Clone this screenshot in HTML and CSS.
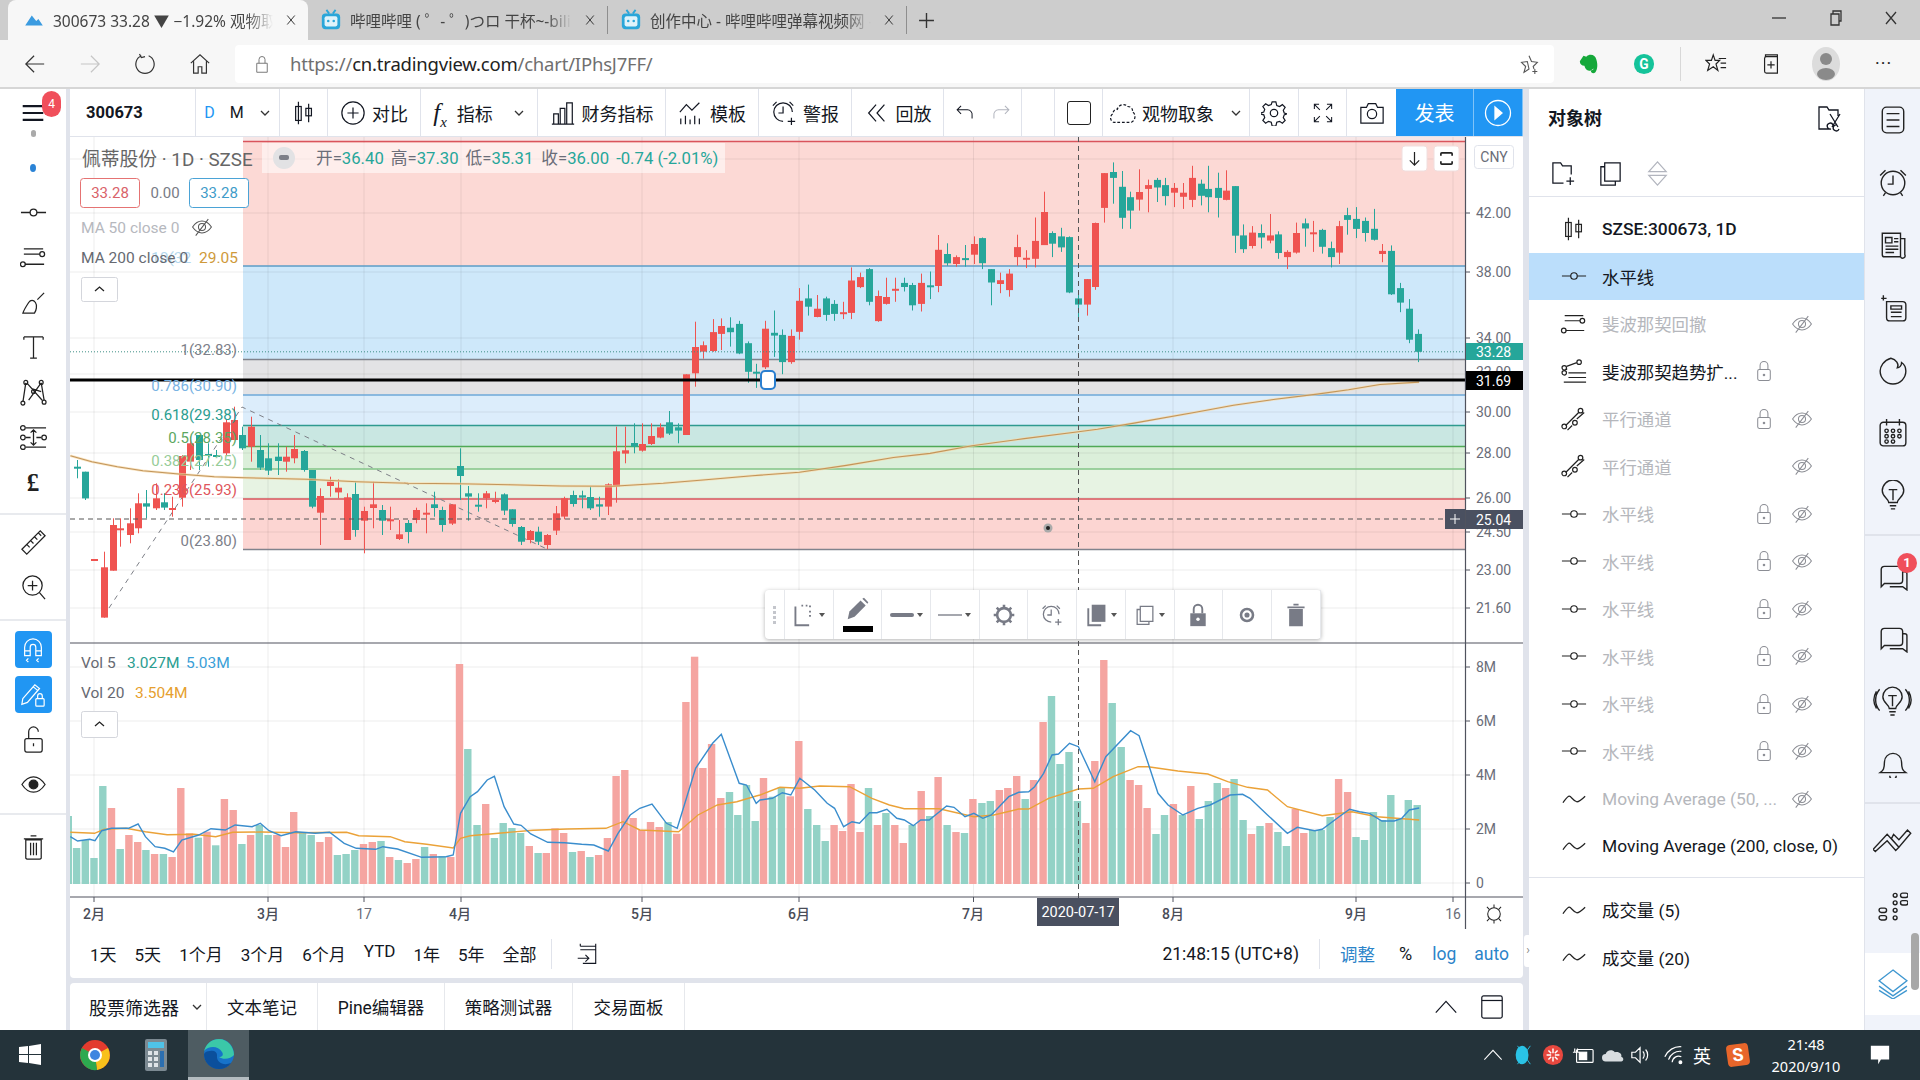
FILE: index.html
```html
<!DOCTYPE html>
<html lang="zh-CN">
<head>
<meta charset="utf-8">
<title>300673 33.28 观物取象 - TradingView</title>
<link rel="stylesheet" href="styles.css">
</head>
<body>
<svg class="defs" aria-hidden="true">
  <symbol id="i-hline" viewBox="0 0 28 28"><path d="M1 14h9.500M17.500 14H27"/><circle cx="14" cy="14" r="3.500"/></symbol>
  <symbol id="i-fib" viewBox="0 0 28 28"><path d="M4 5h20M4 10.500h16.500M5 21h20M7 16h0"/><circle cx="23" cy="10.500" r="2.500"/><circle cx="3" cy="21" r="2.500"/></symbol>
  <symbol id="i-fibext" viewBox="0 0 28 28"><path d="M6 9l11-4M6 13l0-2M8 16h19M8 21h19M3 26h24"/><circle cx="19.500" cy="4.500" r="2.400"/><circle cx="3.500" cy="10.500" r="2.400"/><circle cx="3.500" cy="16" r="2.400"/></symbol>
  <symbol id="i-channel" viewBox="0 0 28 28"><path d="M5 21L19 7M7 26l5-5M17 14l8-7"/><circle cx="21" cy="5" r="2.500"/><circle cx="3.500" cy="22" r="2.500"/><circle cx="15" cy="18" r="2.500"/></symbol>
  <symbol id="i-brush" viewBox="0 0 28 28"><path d="M3 25h12c2-3 3-8 1-11s-5-3-7 0-5 8-6 11zM18 11l7-7"/></symbol>
  <symbol id="i-text" viewBox="0 0 28 28"><path d="M4 3h20M14 3v22M10.500 25h7M4 3v3M24 3v3"/></symbol>
  <symbol id="i-pattern" viewBox="0 0 28 28"><path d="M6 4L3 24M7 4l16 18M22 4L9 22M22 4l3 18M12 10l10 3"/><circle cx="6" cy="3.500" r="2"/><circle cx="22" cy="3.500" r="2"/><circle cx="3" cy="25" r="2"/><circle cx="25" cy="24" r="2"/><circle cx="14" cy="13" r="2"/></symbol>
  <symbol id="i-measure" viewBox="0 0 28 28"><path d="M6 4h21M6 14H11M17 14h5M6 24h21M14 6v16M11 9l3-3 3 3M11 19l3 3 3-3"/><circle cx="3" cy="4" r="2.400"/><circle cx="3" cy="14" r="2.400"/><circle cx="25" cy="14" r="2.400"/><circle cx="3" cy="24" r="2.400"/></symbol>
  <symbol id="i-ruler" viewBox="0 0 28 28"><path d="M2 21L21 2l5 5L7 26zM7 16l3 3M11 12l3 3M15 8l3 3M19 4l3 3"/></symbol>
  <symbol id="i-zoom" viewBox="0 0 28 28"><circle cx="13" cy="12" r="10"/><path d="M13 7v10M8 12h10M20 19l6 7"/></symbol>
  <symbol id="i-magnet" viewBox="0 0 28 28"><path d="M5 20V11a9 9 0 0118 0v9h-6v-9a3 3 0 00-6 0v9zM5 15h6M17 15h6M9 23l-2 2 2 2M20 23l-2 2 2 2"/></symbol>
  <symbol id="i-pencil" viewBox="0 0 28 28"><path d="M3 18L16 3l5 4L8 22l-6 2zM14 5l5 4"/><rect x="17" y="18" width="9" height="8" rx="1"/><path d="M19 18v-3a2.500 2.500 0 015 0v3"/></symbol>
  <symbol id="i-unlock" viewBox="0 0 28 28"><rect x="5" y="13" width="18" height="14" rx="2"/><path d="M9 13V6a5 5 0 0110 0M14 18v3"/></symbol>
  <symbol id="i-eye" viewBox="0 0 28 28"><path d="M2 14c4-6 8-8 12-8s8 2 12 8c-4 6-8 8-12 8s-8-2-12-8z"/><circle cx="14" cy="14" r="4.500" class="solid"/></symbol>
  <symbol id="i-trash" viewBox="0 0 28 28"><path d="M6 7h16v19a2 2 0 01-2 1H8a2 2 0 01-2-1zM4 6h20M11 3h6M11 10v13M14 10v13M17 10v13"/></symbol>
  <symbol id="i-menu" viewBox="0 0 28 28"><path d="M2 6h24M2 14h24M2 22h24" class="thick"/></symbol>
  <symbol id="i-candle" viewBox="0 0 28 28"><path d="M8 2v24M19 4v20"/><rect x="5" y="7" width="6" height="15"/><rect x="16" y="9" width="6" height="8"/></symbol>
  <symbol id="i-plusc" viewBox="0 0 28 28"><circle cx="14" cy="14" r="12"/><path d="M14 8v12M8 14h12"/></symbol>
  <symbol id="i-bars" viewBox="0 0 28 28"><path d="M2 26h24M4 26V15h5v11M11 26V9h5v17M18 26V3h6v23"/></symbol>
  <symbol id="i-tpl" viewBox="0 0 28 28"><path d="M2 13l7-8 6 6 8-8M3 26v-6M8 26v-9M13 26v-5M18 26v-9M23 26v-6"/></symbol>
  <symbol id="i-alarm" viewBox="0 0 28 28"><path d="M13 23a10 10 0 1110-10M13 7v7h-5M6 2L2 6M20 2l4 4M22 19v8M18 23h8"/></symbol>
  <symbol id="i-rewind" viewBox="0 0 28 28"><path d="M13 5l-8 9 8 9M22 5l-8 9 8 9"/></symbol>
  <symbol id="i-undo" viewBox="0 0 28 28"><path d="M4 10h13a6 6 0 016 7v4M9 5l-5 5 5 5"/></symbol>
  <symbol id="i-redo" viewBox="0 0 28 28"><path d="M24 10H11a6 6 0 00-6 7v4M19 5l5 5-5 5"/></symbol>
  <symbol id="i-cloud" viewBox="0 0 28 28"><path d="M6 24H4a5 5 0 01-1-9c0-3 3-6 5-5 1-5 8-7 11-3 4 0 6 3 5 6 4 1 4 9-1 11H6z" stroke-dasharray="3 2"/></symbol>
  <symbol id="i-gear" viewBox="0 0 28 28"><path d="M12 2h4l1 4 3 1 3-2 3 3-2 3 1 3 3 1v0l-3 1-1 3 2 3-3 3-3-2-3 1-1 4h-4l-1-4-3-1-3 2-3-3 2-3-1-3-4-1v-1l4-1 1-3-2-3 3-3 3 2 3-1z"/><circle cx="14" cy="14" r="4"/></symbol>
  <symbol id="i-full" viewBox="0 0 28 28"><path d="M3 9V3h6M3 3l7 7M25 9V3h-6M25 3l-7 7M3 19v6h6M3 25l7-7M25 19v6h-6M25 25l-7-7"/></symbol>
  <symbol id="i-camera" viewBox="0 0 28 28"><path d="M2 8h6l2-4h8l2 4h6v17H2z"/><circle cx="14" cy="15" r="5"/></symbol>
  <symbol id="i-play" viewBox="0 0 28 28"><circle cx="14" cy="14" r="12.500"/><path d="M11 8l7 6-7 6z" class="solid"/></symbol>
  <symbol id="i-foldertools" viewBox="0 0 28 28"><path d="M14 25H3V3h8l2 3h9v6M14 10l8 13M24 10l-8 13M17 21a3 3 0 10-2 4M21 21a3 3 0 102 4"/></symbol>
  <symbol id="i-folderplus" viewBox="0 0 28 28"><path d="M14 24H3V3h8l2 3h9v9M21 18v8M17 22h8"/></symbol>
  <symbol id="i-copy" viewBox="0 0 28 28"><path d="M8 3h16v19H8zM8 7H4v19h15v-4"/></symbol>
  <symbol id="i-updown" viewBox="0 0 28 28"><path d="M14 2l9 10H5zM14 26L5 16h18z"/></symbol>
  <symbol id="i-lock" viewBox="0 0 28 28"><rect x="6" y="12" width="16" height="14" rx="2"/><path d="M9 12V7a5 5 0 0110 0v5"/><circle cx="14" cy="19" r="1" class="solid"/></symbol>
  <symbol id="i-eyeoff" viewBox="0 0 28 28"><path d="M2 14c4-6 8-7.500 12-7.500S22 8 26 14c-4 6-8 7.500-12 7.500S6 20 2 14zM6 25L22 4"/><circle cx="14" cy="14" r="4.500"/></symbol>
  <symbol id="i-wave" viewBox="0 0 28 28"><path d="M2 18c3-4 5-7 7-7s4 5 8 6c3 0 5-2 9-6"/></symbol>
  <symbol id="i-notes" viewBox="0 0 28 28"><rect x="4" y="2" width="20" height="24" rx="4"/><path d="M8 8h12M8 14h12M8 20h12"/></symbol>
  <symbol id="i-clock" viewBox="0 0 28 28"><circle cx="14" cy="14" r="11"/><path d="M14 7v8h-5M7 2L2 7M21 2l5 5M7 23l-2 3M21 23l2 3"/></symbol>
  <symbol id="i-news" viewBox="0 0 28 28"><path d="M4 3h17v22H6a2 2 0 01-2-2zM21 8h4v15a2 2 0 01-4 2M7 7h6v5H7zM15 8h4M15 11h4M7 15h12M7 18h12M7 21h8"/></symbol>
  <symbol id="i-ideas" viewBox="0 0 28 28"><path d="M8 8h15a3 3 0 013 3v12a3 3 0 01-3 3H11a3 3 0 01-3-3zM12 12h10v3H12zM12 18h10M12 22h10M3 5h5M5 2v5"/></symbol>
  <symbol id="i-fire" viewBox="0 0 28 28"><path d="M12 3c-7 2-10 8-10 12a12 12 0 0024 0c0-3-1-6-4-8 0 3-2 5-4 5 2-3-1-8-6-9z"/></symbol>
  <symbol id="i-cal" viewBox="0 0 28 28"><rect x="2" y="4" width="24" height="22" rx="3"/><path d="M8 1v6M20 1v6"/><circle cx="8" cy="12" r="1.600"/><circle cx="14" cy="12" r="1.600"/><circle cx="20" cy="12" r="1.600"/><circle cx="8" cy="17" r="1.600"/><circle cx="14" cy="17" r="1.600"/><circle cx="20" cy="17" r="1.600"/><circle cx="8" cy="22" r="1.600"/><circle cx="14" cy="22" r="1.600"/></symbol>
  <symbol id="i-bulb" viewBox="0 0 28 28"><path d="M10 21c0-4-6-5-6-11a10 10 0 0120 0c0 6-6 7-6 11zM11 24h6M12 27h4M10 9h8M14 9v10"/></symbol>
  <symbol id="i-chat" viewBox="0 0 28 28"><path d="M3 24V8a3 3 0 013-3h14a3 3 0 013 3v10a3 3 0 01-3 3H6zM23 10h2a2 2 0 012 2v15l-4-3H11"/></symbol>
  <symbol id="i-bulbw" viewBox="0 0 36 28"><path d="M15 21c0-4-6-5-6-11a9 9 0 0118 0c0 6-6 7-6 11zM15 24h6M16 27h4M14 9h8M18 9v10M6 3c-5 6-5 14 0 20M30 3c5 6 5 14 0 20M3 5c-3 5-3 11 0 16M33 5c3 5 3 11 0 16"/></symbol>
  <symbol id="i-bell" viewBox="0 0 28 28"><path d="M2 23c3-2 4-4 4-10a8 8 0 0116 0c0 6 1 8 4 10zM11 26a3 3 0 006 0"/></symbol>
  <symbol id="i-chev2" viewBox="0 0 36 28"><path d="M2 21l11-10 8 9 3-3-11-12L0 19zM17 9l7 8 11-13-3-3-8 9-5-5z"/></symbol>
  <symbol id="i-dots" viewBox="0 0 28 28"><circle cx="16" cy="4" r="1.800"/><rect x="21" y="2" width="7" height="4" rx="2"/><circle cx="16" cy="11" r="1.800"/><rect x="21" y="9" width="7" height="4" rx="2"/><circle cx="16" cy="18" r="1.800"/><rect x="1" y="16" width="7" height="4" rx="2"/><circle cx="16" cy="25" r="1.800"/><rect x="1" y="23" width="7" height="4" rx="2"/><circle cx="12" cy="18" r="0"/></symbol>
  <symbol id="i-layers" viewBox="0 0 28 28"><path d="M14 1l13 10-13 10L1 11zM1 16l13 9 13-9M1 20l13 8 13-8"/></symbol>
  <symbol id="i-back" viewBox="0 0 24 24"><path d="M22 12H3M11 3l-9 9 9 9"/></symbol>
  <symbol id="i-reload" viewBox="0 0 24 24"><path d="M8 3a10 10 0 108 0M6 1l2 4 4-1"/></symbol>
  <symbol id="i-home" viewBox="0 0 24 24"><path d="M2 11L12 2l10 9M5 9v13h5v-7h4v7h5V9"/></symbol>
  <symbol id="i-padlock" viewBox="0 0 24 24"><path d="M5 11h14v12H5zM8 11V6a4 4 0 018 0v5"/></symbol>
  <symbol id="i-star" viewBox="0 0 24 24"><path d="M12 2l3 7 7 1-5 5 1 3M12 18l-6 4 2-7-5-5 7-1zM19 18v6M16 21h6"/></symbol>
  <symbol id="i-fav" viewBox="0 0 24 24"><path d="M9 2l2 6h5l-4 4 2 7-5-4-6 4 2-7-4-4h6zM15 6h8M17 11h6M17 16h6"/></symbol>
  <symbol id="i-coll" viewBox="0 0 24 24"><path d="M6 4V2h13v20H7a2 2 0 01-2-2V6a2 2 0 012-2h12M12 9v8M8 13h8"/></symbol>
  <symbol id="i-win" viewBox="0 0 24 24"><path d="M1 4l9-1v8H1zM11 3l12-2v10H11zM1 12h9v8l-9-1zM11 12h12v10l-12-2z"/></symbol>
  <symbol id="i-speaker" viewBox="0 0 24 24"><path d="M2 9h4l5-5v16l-5-5H2zM14 8c2 2 2 6 0 8M17 6c3 3 3 9 0 12"/></symbol>
  <symbol id="i-wifi" viewBox="0 0 24 24"><path d="M2 14A18 18 0 0120 3M6 17A13 13 0 0120 8M10 20a7 7 0 0110-6"/><circle cx="19" cy="20" r="1.500" class="solid"/></symbol>
  <symbol id="i-battery" viewBox="0 0 24 24"><rect x="5" y="6" width="18" height="14" rx="1"/><rect x="8" y="9" width="8" height="8" class="solid"/><path d="M1 9h7M3 5v4M6 5v4"/></symbol>
  <symbol id="i-notify" viewBox="0 0 24 24"><path d="M2 2h20v15h-9l-3 5v-5H2z" class="solid"/></symbol>
  <symbol id="i-jump" viewBox="0 0 28 28"><path d="M5 5h18v20H8M5 5V2M23 5V2M5 9h18M2 19h13M11 15l4 4-4 4"/></symbol>
  <symbol id="i-window" viewBox="0 0 28 28"><rect x="3" y="2" width="22" height="24" rx="2"/><path d="M3 7h22"/></symbol>
  <symbol id="i-up" viewBox="0 0 28 28"><path d="M3 20L14 8l11 12"/></symbol>
  <symbol id="i-bili" viewBox="0 0 24 24"><rect x="2" y="5" width="20" height="17" rx="4" class="blue"/><path d="M7 1l3 4M17 1l-3 4" class="bluel"/><rect x="5" y="8" width="14" height="11" rx="2" class="bili-in"/><circle cx="9" cy="13" r="1.400" class="bili-e"/><circle cx="15" cy="13" r="1.400" class="bili-e"/></symbol>
  <symbol id="i-sel" viewBox="0 0 28 28"><path d="M4 4v22h16M8 2v0M11 3h2M16 3h2M21 3v2M21 9v2M21 14v2" class="grey2"/></symbol>
  <symbol id="i-fpencil" viewBox="0 0 28 28"><path d="M2 26l2-9L17 4l6 6-13 13z" class="fillonly"/><path d="M19 2l2-1 5 5-1 2z" class="fillonly"/></symbol>
  <symbol id="i-fgear" viewBox="0 0 28 28"><circle cx="14" cy="14" r="8" class="ring"/><path d="M14 2v5M14 21v5M2 14h5M21 14h5M5.500 5.500L9 9M19 19l3.500 3.500M22.500 5.500L19 9M9 19l-3.500 3.500" class="ring"/></symbol>
  <symbol id="i-flayers" viewBox="0 0 28 28"><path d="M9 2h16v20H9z" class="fillonly"/><path d="M5 6v20h15" class="grey2"/></symbol>
  <symbol id="i-flock" viewBox="0 0 28 28"><path d="M5 12h18v15H5z" class="fillonly"/><path d="M9 12V7a5 5 0 0110 0v5" class="grey2"/><circle cx="14" cy="19" r="2" class="whitef"/></symbol>
  <symbol id="i-feye" viewBox="0 0 28 28"><circle cx="14" cy="14" r="7" class="ring"/><circle cx="14" cy="14" r="3" class="fillonly"/></symbol>
  <symbol id="i-ftrash" viewBox="0 0 28 28"><path d="M6 7h16v20H6zM4 4h20v2H4zM11 1h6v2h-6z" class="fillonly"/></symbol>
  <symbol id="i-x" viewBox="0 0 16 16"><path d="M3 2l10 12M13 2L3 14"/></symbol>
  <symbol id="i-plus" viewBox="0 0 16 16"><path d="M8 1v14M1 8h14"/></symbol>
  <symbol id="i-min" viewBox="0 0 16 16"><path d="M1 8h14"/></symbol>
  <symbol id="i-restore" viewBox="0 0 16 16"><path d="M4 4h8v11H4zM6 4V1h8v10h-2"/></symbol>
  <symbol id="i-dn" viewBox="0 0 12 8"><path d="M2 2l4 4 4-4"/></symbol>
  <symbol id="i-arrowdown" viewBox="0 0 16 16"><path d="M8 1v14M3 10l5 5 5-5"/></symbol>
  <symbol id="i-reset" viewBox="0 0 16 16"><path d="M2 5V3a1 1 0 011-1h10a1 1 0 011 1v2M2 11v2a1 1 0 001 1h10a1 1 0 001-1v-2"/></symbol>
  <symbol id="i-sun" viewBox="0 0 28 28"><circle cx="14" cy="14" r="8"/><path d="M14 2v4M14 22v4M5 5l3 3M20 20l3 3M23 5l-3 3M8 20l-3 3"/></symbol>
</svg>

<header class="tabstrip">
  <div class="tab tab-active">
    <svg class="favicon" viewBox="0 0 20 20"><path class="tv-a" d="M2 15l6-9 4 5 2-2 4 6z"/></svg>
    <span class="tab-title">300673 33.28 ▼ −1.92% 观物取象 — TradingView</span>
    <svg class="ic tab-x"><use href="#i-x"/></svg>
  </div>
  <div class="tab tab-bg">
    <svg class="favicon bili"><use href="#i-bili"/></svg>
    <span class="tab-title">哔哩哔哩 ( ゜- ゜)つロ 干杯~-bilibili</span>
    <svg class="ic tab-x"><use href="#i-x"/></svg>
  </div>
  <div class="tab tab-bg tab-sep">
    <svg class="favicon bili"><use href="#i-bili"/></svg>
    <span class="tab-title">创作中心 - 哔哩哔哩弹幕视频网 - ( ゜- ゜)</span>
    <svg class="ic tab-x"><use href="#i-x"/></svg>
  </div>
  <div class="tab-new"><svg class="ic new-plus"><use href="#i-plus"/></svg></div>
  <div class="win-ctrl">
    <svg class="ic wc"><use href="#i-min"/></svg>
    <svg class="ic wc"><use href="#i-restore"/></svg>
    <svg class="ic wc"><use href="#i-x"/></svg>
  </div>
</header>

<nav class="navbar">
  <div class="nav-btns">
    <svg class="ic nav-ic"><use href="#i-back"/></svg>
    <svg class="ic nav-ic nav-off flip"><use href="#i-back"/></svg>
    <svg class="ic nav-ic"><use href="#i-reload"/></svg>
    <svg class="ic nav-ic"><use href="#i-home"/></svg>
  </div>
  <div class="urlbar">
    <svg class="ic url-lock"><use href="#i-padlock"/></svg>
    <span class="url"><span class="url-dim">https://</span>cn.tradingview.com<span class="url-dim">/chart/IPhsJ7FF/</span></span>
    <svg class="ic url-star"><use href="#i-star"/></svg>
  </div>
  <div class="ext">
    <svg class="ext-ic" viewBox="0 0 24 24"><path class="ever" d="M6 3l3 1c4-4 10-2 11 3 2 6 1 11-1 14-2 2-5 1-5-2-4 1-6-1-7-5-3 0-5-2-5-5zM14 19c2 0 3-1 3-2"/></svg>
    <svg class="ext-ic" viewBox="0 0 24 24"><circle cx="12" cy="12" r="11" class="gram"/><text x="12" y="17" class="gram-t">G</text></svg>
    <i class="ext-div"></i>
    <svg class="ic ext-line"><use href="#i-fav"/></svg>
    <svg class="ic ext-line"><use href="#i-coll"/></svg>
    <svg class="ext-ic avatar" viewBox="0 0 28 34"><ellipse cx="14" cy="17" rx="14" ry="17" class="av-a"/><circle cx="14" cy="12" r="6" class="av-b"/><ellipse cx="14" cy="27" rx="9" ry="6" class="av-b"/></svg>
    <span class="more">···</span>
  </div>
</nav>
<div class="navsep"></div>

<main class="app">
  <aside class="leftbar">
    <div class="lb-head">
      <svg class="ic lb-menu"><use href="#i-menu"/></svg>
      <span class="lb-badge">4</span>
      <i class="lb-dot"></i>
    </div>
    <div class="lb-group">
      <div class="lb-cell"><i class="blue-dot"></i></div>
      <div class="lb-cell"><svg class="ic lb-ic"><use href="#i-hline"/></svg></div>
      <div class="lb-cell"><svg class="ic lb-ic"><use href="#i-fib"/></svg></div>
      <div class="lb-cell"><svg class="ic lb-ic"><use href="#i-brush"/></svg></div>
      <div class="lb-cell"><svg class="ic lb-ic"><use href="#i-text"/></svg></div>
      <div class="lb-cell"><svg class="ic lb-ic"><use href="#i-pattern"/></svg></div>
      <div class="lb-cell"><svg class="ic lb-ic"><use href="#i-measure"/></svg></div>
      <div class="lb-cell lb-pound">£</div>
    </div>
    <div class="lb-group lb-g2">
      <div class="lb-cell"><svg class="ic lb-ic"><use href="#i-ruler"/></svg></div>
      <div class="lb-cell"><svg class="ic lb-ic"><use href="#i-zoom"/></svg></div>
    </div>
    <div class="lb-group lb-g3">
      <div class="lb-cell"><span class="lb-on"><svg class="ic lb-ic"><use href="#i-magnet"/></svg></span></div>
      <div class="lb-cell"><span class="lb-on"><svg class="ic lb-ic"><use href="#i-pencil"/></svg></span></div>
      <div class="lb-cell"><svg class="ic lb-ic"><use href="#i-unlock"/></svg></div>
      <div class="lb-cell"><svg class="ic lb-ic"><use href="#i-eye"/></svg></div>
    </div>
    <div class="lb-group lb-g4">
      <div class="lb-cell"><svg class="ic lb-ic"><use href="#i-trash"/></svg></div>
    </div>
  </aside>

  <section class="center">
    <div class="topbar">
      <div class="tb w126 tb-sym">300673</div>
      <div class="tb w84 tb-res"><span class="res-on">D</span><span>M</span><svg class="ic dn"><use href="#i-dn"/></svg></div>
      <div class="tb w48"><svg class="ic tb-ic"><use href="#i-candle"/></svg></div>
      <div class="tb w93"><svg class="ic tb-ic"><use href="#i-plusc"/></svg>对比</div>
      <div class="tb w117"><span class="fx">f<sub>x</sub></span>指标<svg class="ic dn dn-far"><use href="#i-dn"/></svg></div>
      <div class="tb w128"><svg class="ic tb-ic"><use href="#i-bars"/></svg>财务指标</div>
      <div class="tb w93"><svg class="ic tb-ic"><use href="#i-tpl"/></svg>模板</div>
      <div class="tb w93"><svg class="ic tb-ic"><use href="#i-alarm"/></svg>警报</div>
      <div class="tb w92"><svg class="ic tb-ic"><use href="#i-rewind"/></svg>回放</div>
      <div class="tb w78 tb-undo"><svg class="ic tb-sm"><use href="#i-undo"/></svg><svg class="ic tb-sm off"><use href="#i-redo"/></svg></div>
      <div class="tb w33"></div>
      <div class="tb w48"><i class="tb-square"></i></div>
      <div class="tb w147"><svg class="ic tb-ic"><use href="#i-cloud"/></svg>观物取象<svg class="ic dn dn-far2"><use href="#i-dn"/></svg></div>
      <div class="tb w49"><svg class="ic tb-ic"><use href="#i-gear"/></svg></div>
      <div class="tb w48"><svg class="ic tb-ic tb-ic-s"><use href="#i-full"/></svg></div>
      <div class="tb w49 nob"><svg class="ic tb-ic"><use href="#i-camera"/></svg></div>
      <div class="tb w78 pub">发表</div>
      <div class="tb w49 pub nob"><svg class="ic tb-play"><use href="#i-play"/></svg></div>
    </div>

    <div class="chartwrap">
      <svg class="chart" viewBox="70 137 1453 792" width="1453" height="792">
        <!-- fib zones -->
        <rect class="z-top" x="243" y="137" width="1223" height="4"/>
        <rect class="z-red" x="243" y="141" width="1223" height="125"/>
        <rect class="z-blue" x="243" y="266" width="1223" height="93"/>
        <rect class="z-gray" x="243" y="359" width="1223" height="36"/>
        <rect class="z-lblue" x="243" y="395" width="1223" height="30.500"/>
        <rect class="z-teal" x="243" y="425.500" width="1223" height="21"/>
        <rect class="z-green" x="243" y="446.500" width="1223" height="22.500"/>
        <rect class="z-lgreen" x="243" y="469" width="1223" height="30"/>
        <rect class="z-red2" x="243" y="499" width="1223" height="50.500"/>

        <path class="grid" d="M70 159H1466M70 213H1466M70 272H1466M70 338H1466M70 374H1466M70 412H1466M70 453H1466M70 498H1466M70 532H1466M70 570H1466M70 608H1466M70 667H1466M70 721H1466M70 775H1466M70 829H1466M70 883H1466M94 137V897M268 137V897M364 137V897M461 137V897M642 137V897M799 137V897M973.500 137V897M1173 137V897M1356 137V897M1453 137V897"/>

        <path class="fl fl-red" d="M243 141.500H1466"/>
        <path class="fl fl-blue" d="M243 266H1466"/>
        <path class="fl fl-gray" d="M243 359.500H1466"/>
        <path class="fl fl-lblue" d="M243 395H1466"/>
        <path class="fl fl-teal" d="M243 425.500H1466"/>
        <path class="fl fl-green" d="M243 446.500H1466"/>
        <path class="fl fl-lgreen" d="M243 469H1466"/>
        <path class="fl fl-red" d="M243 499H1466"/>
        <path class="fl fl-gray" d="M243 549.500H1466"/>
        <path class="dash-gray" d="M109 608L242 407L547 549"/>

        <g id="bars"></g>
        <polyline id="vol-o" class="ln-o"/>
        <polyline id="vol-b" class="ln-b"/>
        <g id="candles"></g>
        <polyline id="ma200h" class="ma-h"/>
        <polyline id="ma200" class="ma"/>

        <path class="dotline" d="M70 351.800H1466"/>
        <path class="cross" d="M70 519H1445M1078.500 137V897"/>
        <path class="blackline" d="M70 380H1466"/>
        <rect class="handle" x="761" y="371" width="14" height="18" rx="4"/>
        <circle class="dot-o" cx="1048" cy="528" r="4.500"/><circle class="dot-i" cx="1048" cy="528" r="2"/>

        <!-- fib labels -->
        <g class="fib-t">
          <text x="237" y="355" class="c-gray">1(32.83)</text>
          <text x="237" y="391" class="c-lblue">0.786(30.90)</text>
          <text x="237" y="420" class="c-teal">0.618(29.38)</text>
          <text x="237" y="443" class="c-green">0.5(28.35)</text>
          <text x="237" y="466" class="c-lgreen">0.382(27.25)</text>
          <text x="237" y="495" class="c-red">0.236(25.93)</text>
          <text x="237" y="546" class="c-gray">0(23.80)</text>
        </g>

        <!-- pane borders -->
        <rect class="axis-bg" x="1466" y="137" width="57" height="760"/>
        <path class="ticks" d="M1466 213h4M1466 272h4M1466 338h4M1466 412h4M1466 453h4M1466 498h4M1466 532h4M1466 570h4M1466 608h4M1466 667h4M1466 721h4M1466 775h4M1466 829h4M1466 883h4"/>
        <path class="axisline" d="M1465.500 137V929M70 643H1523M70 897H1523"/>
        <path class="ticks" d="M94 897v5M268 897v5M364 897v5M461 897v5M642 897v5M799 897v5M973.500 897v5M1078.500 897v5M1173 897v5M1356 897v5M1453 897v5"/>

        <!-- price axis -->
        <g class="px">
          <text x="1476" y="218">42.00</text>
          <text x="1476" y="277">38.00</text>
          <text x="1476" y="343">34.00</text>
          <text x="1476" y="377">32.00</text>
          <text x="1476" y="417">30.00</text>
          <text x="1476" y="458">28.00</text>
          <text x="1476" y="503">26.00</text>
          <text x="1476" y="537">24.50</text>
          <text x="1476" y="575">23.00</text>
          <text x="1476" y="613">21.60</text>
          <text x="1476" y="672">8M</text>
          <text x="1476" y="726">6M</text>
          <text x="1476" y="780">4M</text>
          <text x="1476" y="834">2M</text>
          <text x="1476" y="888">0</text>
        </g>
        <rect class="bd-green" x="1466" y="343" width="57" height="17"/>
        <text class="bd-t" x="1476" y="356.500">33.28</text>
        <rect class="bd-black" x="1466" y="371" width="57" height="19"/>
        <text class="bd-t" x="1476" y="385.500">31.69</text>
        <rect class="bd-dark" x="1445" y="509" width="20" height="20"/>
        <path class="bd-plus" d="M1450 519h10M1455 514v10"/>
        <rect class="bd-dark" x="1466" y="510" width="57" height="19"/>
        <text class="bd-t" x="1476" y="524.500">25.04</text>

        <!-- time axis -->
        <g class="tx">
          <text x="94" y="919">2月</text>
          <text x="268" y="919">3月</text>
          <text x="364" y="919" class="tx-l">17</text>
          <text x="460" y="919">4月</text>
          <text x="642" y="919">5月</text>
          <text x="799" y="919">6月</text>
          <text x="973" y="919">7月</text>
          <text x="1173" y="919">8月</text>
          <text x="1356" y="919">9月</text>
          <text x="1453" y="919" class="tx-l">16</text>
        </g>
        <rect class="bd-dark" x="1037" y="898" width="82" height="28"/>
        <text class="bd-t bd-c" x="1078" y="917">2020-07-17</text>
        <use href="#i-sun" class="ic sun" x="1483" y="902" width="22" height="24"/>

        <!-- legend -->
        <rect class="ohlc-bg" x="262" y="143" width="463" height="30"/>
        <text class="lg-title" x="82" y="166">佩蒂股份 · 1D · SZSE</text>
        <ellipse class="min-o" cx="284" cy="158" rx="11" ry="11"/>
        <rect class="min-i" x="279" y="155" width="10" height="5" rx="2"/>
        <text class="ohlc" x="316" y="164"><tspan>开=</tspan><tspan class="v">36.40</tspan><tspan dx="7">高=</tspan><tspan class="v">37.30</tspan><tspan dx="7">低=</tspan><tspan class="v">35.31</tspan><tspan dx="8">收=</tspan><tspan class="v">36.00</tspan><tspan dx="7" class="v">-0.74 (-2.01%)</tspan></text>
        <rect class="box-r" x="80.500" y="178.500" width="59" height="29" rx="3"/>
        <text class="box-t c-rd" x="110" y="198">33.28</text>
        <text class="box-t c-gy" x="165" y="198">0.00</text>
        <rect class="box-b" x="189.500" y="178.500" width="59" height="29" rx="3"/>
        <text class="box-t c-bl" x="219" y="198">33.28</text>
        <text class="lg-s lg-m" x="81" y="233">MA 50 close 0</text>
        <use href="#i-eyeoff" class="ic lg-eye" x="191" y="216" width="22" height="22"/>
        <text class="lg-s lg-g" x="151" y="263">10(32</text>
        <text class="lg-s lg-d" x="81" y="263">MA 200 close 0</text>
        <text class="lg-s lg-o" x="199" y="263">29.05</text>
        <rect class="coll" x="81.500" y="277.500" width="36" height="24" rx="2"/>
        <path class="coll-c" d="M95 291l4.500-4 4.500 4"/>
        <rect class="btn-w" x="1402" y="146" width="25" height="25" rx="3"/>
        <use href="#i-arrowdown" class="ic btn-i" x="1407" y="151" width="15" height="15"/>
        <rect class="btn-w" x="1434" y="146" width="25" height="25" rx="3"/>
        <use href="#i-reset" class="ic btn-i btn-i2" x="1439" y="151" width="15" height="15"/>
        <rect class="cny" x="1474.500" y="145.500" width="39" height="23" rx="3"/>
        <text class="cny-t" x="1494" y="162">CNY</text>

        <text class="lg-s lg-d" x="81" y="668">Vol 5</text>
        <text class="lg-s c-teal" x="127" y="668">3.027M</text>
        <text class="lg-s c-blue2" x="186" y="668">5.03M</text>
        <text class="lg-s lg-d" x="81" y="698">Vol 20</text>
        <text class="lg-s c-orange" x="135" y="698">3.504M</text>
        <rect class="coll" x="81.500" y="711.500" width="36" height="26" rx="2"/>
        <path class="coll-c" d="M95 726l4.500-4 4.500 4"/>
      </svg>

      <div class="floatbar">
        <div class="fb fb-h"><i></i></div>
        <div class="fb w48f"><svg class="ic fb-ic"><use href="#i-sel"/></svg><b class="car"></b></div>
        <div class="fb w48f fb-pen"><svg class="ic fb-ic"><use href="#i-fpencil"/></svg><i class="pen-bar"></i></div>
        <div class="fb w48f"><i class="ln ln3"></i><b class="car"></b></div>
        <div class="fb w48f"><i class="ln ln1"></i><b class="car"></b></div>
        <div class="fb w48f"><svg class="ic fb-ic"><use href="#i-fgear"/></svg></div>
        <div class="fb w48f"><svg class="ic fb-ic fb-l"><use href="#i-alarm"/></svg></div>
        <div class="fb w48f"><svg class="ic fb-ic"><use href="#i-flayers"/></svg><b class="car"></b></div>
        <div class="fb w48f"><svg class="ic fb-ic fb-l"><use href="#i-copy"/></svg><b class="car"></b></div>
        <div class="fb w48f"><svg class="ic fb-ic"><use href="#i-flock"/></svg></div>
        <div class="fb w48f"><svg class="ic fb-ic"><use href="#i-feye"/></svg></div>
        <div class="fb w48f nob"><svg class="ic fb-ic"><use href="#i-ftrash"/></svg></div>
      </div>
    </div>

    <div class="rangebar">
      <div class="ranges">
        <span>1天</span><span>5天</span><span>1个月</span><span>3个月</span><span>6个月</span><span>YTD</span><span>1年</span><span>5年</span><span>全部</span>
      </div>
      <i class="rb-div"></i>
      <svg class="ic rb-ic"><use href="#i-jump"/></svg>
      <span class="rb-clock">21:48:15 (UTC+8)</span>
      <i class="rb-div rb-div2"></i>
      <span class="rb-b">调整</span><span class="rb-p">%</span><span class="rb-b rb-log">log</span><span class="rb-b">auto</span>
    </div>

    <div class="bottomtabs">
      <div class="bt bt1">股票筛选器<svg class="ic dn"><use href="#i-dn"/></svg></div>
      <div class="bt bt2">文本笔记</div>
      <div class="bt bt3">Pine编辑器</div>
      <div class="bt bt4">策略测试器</div>
      <div class="bt bt5">交易面板</div>
      <svg class="ic bt-up"><use href="#i-up"/></svg>
      <svg class="ic bt-win"><use href="#i-window"/></svg>
    </div>
  </section>

  <aside class="panel">
    <div class="p-head"><h2>对象树</h2><svg class="ic p-ht"><use href="#i-foldertools"/></svg></div>
    <div class="p-tools">
      <svg class="ic p-t"><use href="#i-folderplus"/></svg>
      <svg class="ic p-t"><use href="#i-copy"/></svg>
      <svg class="ic p-t off"><use href="#i-updown"/></svg>
    </div>
    <ul class="rows">
      <li class="row row-b"><svg class="ic r-ic"><use href="#i-candle"/></svg><span class="r-t">SZSE:300673, 1D</span></li>
      <li class="row row-sel"><svg class="ic r-ic"><use href="#i-hline"/></svg><span class="r-t">水平线</span></li>
      <li class="row muted"><svg class="ic r-ic"><use href="#i-fib"/></svg><span class="r-t">斐波那契回撤</span><svg class="ic r-a"><use href="#i-eyeoff"/></svg></li>
      <li class="row"><svg class="ic r-ic"><use href="#i-fibext"/></svg><span class="r-t">斐波那契趋势扩...</span><svg class="ic r-a r-lockonly"><use href="#i-lock"/></svg></li>
      <li class="row muted"><svg class="ic r-ic"><use href="#i-channel"/></svg><span class="r-t">平行通道</span><svg class="ic r-a"><use href="#i-lock"/></svg><svg class="ic r-a"><use href="#i-eyeoff"/></svg></li>
      <li class="row muted"><svg class="ic r-ic"><use href="#i-channel"/></svg><span class="r-t">平行通道</span><svg class="ic r-a"><use href="#i-eyeoff"/></svg></li>
      <li class="row muted"><svg class="ic r-ic"><use href="#i-hline"/></svg><span class="r-t">水平线</span><svg class="ic r-a"><use href="#i-lock"/></svg><svg class="ic r-a"><use href="#i-eyeoff"/></svg></li>
      <li class="row muted"><svg class="ic r-ic"><use href="#i-hline"/></svg><span class="r-t">水平线</span><svg class="ic r-a"><use href="#i-lock"/></svg><svg class="ic r-a"><use href="#i-eyeoff"/></svg></li>
      <li class="row muted"><svg class="ic r-ic"><use href="#i-hline"/></svg><span class="r-t">水平线</span><svg class="ic r-a"><use href="#i-lock"/></svg><svg class="ic r-a"><use href="#i-eyeoff"/></svg></li>
      <li class="row muted"><svg class="ic r-ic"><use href="#i-hline"/></svg><span class="r-t">水平线</span><svg class="ic r-a"><use href="#i-lock"/></svg><svg class="ic r-a"><use href="#i-eyeoff"/></svg></li>
      <li class="row muted"><svg class="ic r-ic"><use href="#i-hline"/></svg><span class="r-t">水平线</span><svg class="ic r-a"><use href="#i-lock"/></svg><svg class="ic r-a"><use href="#i-eyeoff"/></svg></li>
      <li class="row muted"><svg class="ic r-ic"><use href="#i-hline"/></svg><span class="r-t">水平线</span><svg class="ic r-a"><use href="#i-lock"/></svg><svg class="ic r-a"><use href="#i-eyeoff"/></svg></li>
      <li class="row muted"><svg class="ic r-ic"><use href="#i-wave"/></svg><span class="r-t">Moving Average (50, ...</span><svg class="ic r-a"><use href="#i-eyeoff"/></svg></li>
      <li class="row"><svg class="ic r-ic"><use href="#i-wave"/></svg><span class="r-t">Moving Average (200, close, 0)</span></li>
    </ul>
    <ul class="rows rows2">
      <li class="row"><svg class="ic r-ic"><use href="#i-wave"/></svg><span class="r-t">成交量 (5)</span></li>
      <li class="row"><svg class="ic r-ic"><use href="#i-wave"/></svg><span class="r-t">成交量 (20)</span></li>
    </ul>
  </aside>

  <aside class="rail">
    <div class="rail-g">
      <div class="rail-c"><svg class="ic rail-i"><use href="#i-notes"/></svg></div>
      <div class="rail-c"><svg class="ic rail-i"><use href="#i-clock"/></svg></div>
      <div class="rail-c"><svg class="ic rail-i"><use href="#i-news"/></svg></div>
      <div class="rail-c"><svg class="ic rail-i"><use href="#i-ideas"/></svg></div>
      <div class="rail-c"><svg class="ic rail-i"><use href="#i-fire"/></svg></div>
      <div class="rail-c"><svg class="ic rail-i"><use href="#i-cal"/></svg></div>
      <div class="rail-c"><svg class="ic rail-i"><use href="#i-bulb"/></svg></div>
    </div>
    <div class="rail-g rail-g2">
      <div class="rail-c rail-rel"><svg class="ic rail-i"><use href="#i-chat"/></svg><span class="rail-badge">1</span></div>
      <div class="rail-c"><svg class="ic rail-i"><use href="#i-chat"/></svg></div>
      <div class="rail-c"><svg class="ic rail-i rail-w"><use href="#i-bulbw"/></svg></div>
      <div class="rail-c"><svg class="ic rail-i"><use href="#i-bell"/></svg></div>
    </div>
    <div class="rail-g rail-g3">
      <div class="rail-c"><svg class="ic rail-i rail-w"><use href="#i-chev2"/></svg></div>
      <div class="rail-c"><svg class="ic rail-i"><use href="#i-dots"/></svg></div>
      <div class="rail-c rail-act"><svg class="ic rail-i"><use href="#i-layers"/></svg></div>
      <div class="rail-c"><svg class="ic rail-i"><use href="#i-plusc"/></svg></div>
    </div>
    <i class="rail-scroll"></i>
  </aside>
  <span class="side-h">›</span>
</main>

<footer class="taskbar">
  <svg class="ic tk-win"><use href="#i-win"/></svg>
  <div class="tk-app">
    <svg class="tk-ic" viewBox="0 0 32 32"><circle cx="16" cy="16" r="15" class="ch-r"/><path class="ch-y" d="M16 16L29 9a15 15 0 01-11 22z"/><path class="ch-g" d="M16 16L18 31A15 15 0 013 9z"/><circle cx="16" cy="16" r="7" class="whitef"/><circle cx="16" cy="16" r="5" class="ch-b"/></svg>
  </div>
  <div class="tk-app">
    <svg class="tk-ic" viewBox="0 0 24 32"><rect x="1" width="22" height="32" rx="2" class="calc"/><rect x="4" y="3" width="16" height="6" class="calc-s"/><path class="calc-k" d="M4 12h4v4H4zM10 12h4v4h-4zM4 18h4v4H4zM10 18h4v4h-4zM4 24h4v4H4zM10 24h4v4h-4z"/><rect x="16" y="12" width="4" height="16" class="calc-b"/></svg>
  </div>
  <div class="tk-app tk-on">
    <svg class="tk-ic" viewBox="0 0 32 32"><circle cx="16" cy="16" r="15" class="ed-b"/><path class="ed-g" d="M31 17c0-8-6-16-15-16C8 1 3 6 1 13c4-5 14-6 18 1 2 3 0 5-3 5 4 3 12 2 15-2z"/><path class="ed-d" d="M1 16c0 8 6 15 15 15 5 0 9-2 12-6-7 3-15 0-14-8 0-3-3-5-7-4-3 0-5 1-6 3z"/></svg>
  </div>
  <div class="tray">
    <svg class="ic tr-i"><use href="#i-up"/></svg>
    <svg class="tr-c" viewBox="0 0 24 24"><ellipse cx="11" cy="12" rx="7" ry="10" class="cy"/><path d="M20 2L6 22M6 2l14 20" class="cyl"/></svg>
    <svg class="tr-c" viewBox="0 0 24 24"><circle cx="12" cy="12" r="11" class="rd"/><path class="whitel" d="M12 5v5M12 14v5M5 12h5M14 12h5M7 7l3 3M14 14l3 3M17 7l-3 3M10 14l-3 3"/></svg>
    <svg class="ic tr-i"><use href="#i-battery"/></svg>
    <svg class="tr-c tr-cl" viewBox="0 0 24 24"><path class="cloud" d="M4 19a4 4 0 010-8c1-4 7-6 10-2 5-1 8 2 7 5 3 1 3 5 0 5z"/></svg>
    <svg class="ic tr-i tr-sp"><use href="#i-speaker"/></svg>
    <svg class="ic tr-i"><use href="#i-wifi"/></svg>
    <span class="tr-ime">英</span>
    <span class="tr-s">S</span>
    <div class="clock"><span>21:48</span><span>2020/9/10</span></div>
    <svg class="ic tr-n"><use href="#i-notify"/></svg>
  </div>
</footer>
<script src="chart.js"></script>
</body>
</html>
```
FILE: styles.css
```css
* { box-sizing: border-box; }
html, body { margin: 0; width: 1920px; height: 1080px; overflow: hidden; }
body {
  display: flex; flex-direction: column;
  font-family: Roboto, "Noto Sans CJK SC", sans-serif;
  color: #131722; background: #e0e3eb;
}
ul { list-style: none; margin: 0; padding: 0; }
h2 { margin: 0 0 5px; font-size: 18px; font-weight: 700; }
i, b { display: block; font-style: normal; }
.defs { position: absolute; width: 0; height: 0; }
.ic { fill: none; stroke: currentColor; stroke-width: 1.3; display: block; flex: none; }
.solid { fill: currentColor; }
.thick { stroke-width: 2.6; }
.whitef { fill: #fff; stroke: none; }
.whitel { stroke: #fff; fill: none; stroke-width: 1.6; }
.blue { fill: #2aa6d9; stroke: none; }
.bluel { stroke: #2aa6d9; stroke-width: 2; fill: none; }
.bili-in { fill: #dff3fb; stroke: none; }
.bili-e { fill: #2aa6d9; stroke: none; }
.off { color: #b2b5be; }

/* browser chrome */
.tabstrip { height: 40px; background: #cdcdcd; display: flex; align-items: flex-end; padding-left: 8px; flex: none; }
.tab { width: 299px; height: 40px; display: flex; align-items: center; padding: 0 11px 0 15px; font: 15.5px "Noto Sans", "Noto Sans CJK SC", sans-serif; color: #444; }
.tab-active { background: #f7f7f7; border-radius: 8px 8px 0 0; width: 300px; }
.tab-sep { border-left: 1px solid #8e8e8e; height: 28px; margin-bottom: 6px; margin-left: 0; padding-left: 13px; }
.tab-bg { height: 28px; margin-bottom: 6px; padding-left: 12px; }
.tab-title { flex: 1; white-space: nowrap; overflow: hidden; margin: 0 12px 0 8px; -webkit-mask-image: linear-gradient(90deg, #000 88%, transparent); mask-image: linear-gradient(90deg, #000 88%, transparent); }
.favicon { width: 22px; height: 24px; flex: none; color: #2aa6d9; }
.tv-a { fill: #3b9be0; }
.tab-x { width: 12px; height: 18px; color: #333; }
.tab-new { width: 40px; height: 28px; margin-bottom: 6px; border-left: 1px solid #8e8e8e; display: flex; align-items: center; justify-content: center; }
.new-plus { width: 17px; height: 17px; color: #333; }
.win-ctrl { margin-left: auto; display: flex; gap: 40px; padding-right: 21px; align-self: flex-start; height: 36px; align-items: center; color: #333; }
.wc { width: 16px; height: 20px; }

.navbar { height: 47px; background: #f7f7f7; display: flex; align-items: center; flex: none; }
.nav-btns { width: 235px; flex: none; display: flex; gap: 33px; padding-left: 24px; color: #333; }
.nav-ic { width: 22px; height: 24px; }
.nav-off { color: #c6c6c6; }
.flip { transform: scaleX(-1); }
.urlbar { width: 1319px; height: 38px; background: #fff; border-radius: 4px; display: flex; align-items: center; flex: none; padding-left: 18px; }
.url-lock { width: 18px; height: 22px; color: #777; }
.url { margin-left: 19px; font: 18.5px "Noto Sans", sans-serif; color: #222; letter-spacing: -.2px; }
.url-dim { color: #6f6f6f; }
.url-star { margin-left: auto; margin-right: 15px; width: 20px; height: 24px; color: #555; }
.ext { display: flex; align-items: center; flex: 1; padding-left: 24px; color: #222; }
.ext-ic { width: 22px; height: 26px; flex: none; }
.ever { fill: #15a83a; }
.gram { fill: #15c39a; }
.gram-t { fill: #fff; font: 700 15px Roboto, sans-serif; text-anchor: middle; }
.ext-div { width: 1px; height: 34px; background: #d8d8d8; margin: 0 25px 0 25px; }
.ext .ext-ic + .ext-ic { margin-left: 33px; }
.ext-line { width: 22px; height: 26px; margin-left: -1px; }
.ext-line + .ext-line { margin-left: 33px; }
.avatar { width: 28px; height: 34px; margin-left: 30px; }
.av-a { fill: #dcdcdc; }
.av-b { fill: #8a8a8a; }
.more { margin-left: 35px; font-size: 18px; letter-spacing: 1px; }
.navsep { height: 2px; background: #d6d6d6; flex: none; }

/* app shell */
.app { height: 941px; display: flex; position: relative; flex: none; background: #e0e3eb; }
.leftbar { width: 66px; flex: none; background: #fff; margin-right: 4px; }
.lb-head { height: 56px; position: relative; display: flex; flex-direction: column; align-items: center; padding-top: 12px; }
.lb-menu { width: 24px; height: 24px; }
.lb-badge { position: absolute; left: 42px; top: 2px; width: 19px; height: 26px; border-radius: 10px; background: #f04f5b; color: #fff; font-size: 12px; line-height: 26px; text-align: center; }
.lb-dot { width: 5px; height: 7px; border-radius: 3px; background: #aaa; margin-top: 5px; }
.lb-group { border-bottom: 2px solid #e8eaee; padding-bottom: 8px; }
.lb-g2 { padding: 5px 0 9px; }
.lb-g3 { padding: 6px 0; }
.lb-g4 { border: 0; padding-top: 9px; }
.lb-cell { height: 45px; display: flex; align-items: center; justify-content: center; color: #222; }
.lb-ic { width: 27px; height: 27px; }
.blue-dot { width: 6px; height: 8px; border-radius: 50%; background: #2a83d6; }
.lb-pound { font: 700 25px "Liberation Serif", serif; }
.lb-on { width: 37px; height: 37px; background: #2196f3; border-radius: 4px; display: flex; align-items: center; justify-content: center; color: #fff; }
.lb-on .lb-ic { width: 26px; height: 28px; }

.center { width: 1453px; flex: none; display: flex; flex-direction: column; margin-right: 6px; }
.topbar { height: 48px; background: #fff; display: flex; flex: none; font-size: 18px; border-bottom: 1px solid #e0e3eb; }
.tb { display: flex; align-items: center; justify-content: center; gap: 6px; border-right: 1px solid #e0e3eb; flex: none; white-space: nowrap; }
.nob { border-right: 0; }
.w126 { width: 126px; } .w84 { width: 84px; } .w48 { width: 48px; } .w93 { width: 93px; } .w117 { width: 117px; } .w128 { width: 128px; } .w92 { width: 92px; } .w78 { width: 78px; } .w33 { width: 33px; } .w147 { width: 147px; } .w49 { width: 49px; }
.tb-sym { font-size: 16.500px; font-weight: 700; justify-content: flex-start; padding-left: 16px; }
.tb-res { font-size: 16px; gap: 15px; }
.res-on { color: #2196f3; }
.tb-res .dn { margin-left: 0; }
.dn { width: 12px; height: 8px; color: #333; }
.dn-far { margin-left: 14px; }
.dn-far2 { margin-left: 10px; }
.tb-ic { width: 26px; height: 26px; }
.tb-ic-s { width: 22px; height: 22px; }
.tb-sm { width: 22px; height: 22px; }
.tb-undo { gap: 14px; }
.tb-square { width: 24px; height: 24px; border: 1.5px solid #222; border-radius: 3px; }
.fx { font: italic 25px "Liberation Serif", serif; line-height: 1; margin-right: 4px; }
.fx sub { font-size: 15px; vertical-align: -6px; line-height: 0; }
.pub { background: #2196f3; color: #fff; font-size: 20px; border-right: 1px solid #7fc3f8; }
.tb-play { width: 28px; height: 28px; color: #fff; }

.chartwrap { height: 792px; position: relative; flex: none; background: #fff; }
.chart { display: block; font-family: Roboto, "Noto Sans CJK SC", sans-serif; }
.z-top { fill: #f7e6e6; }
.z-red { fill: #fcd9d5; }
.z-blue { fill: #cee8fa; }
.z-gray { fill: #e3e3e5; }
.z-lblue { fill: #dcedfb; }
.z-teal { fill: #c9e7e2; }
.z-green { fill: #dbefda; }
.z-lgreen { fill: #e7f3e3; }
.z-red2 { fill: #fcd5d2; }
.grid { stroke: #000; stroke-opacity: .07; fill: none; }
.fl { fill: none; stroke-width: 1.300; }
.fl-red { stroke: #d9545c; }
.fl-blue { stroke: #5c9cc6; }
.fl-gray { stroke: #80838d; }
.fl-lblue { stroke: #6ea9d8; }
.fl-teal { stroke: #2f9a8f; }
.fl-green { stroke: #4fa956; }
.fl-lgreen { stroke: #83c487; }
.dash-gray { fill: none; stroke: #7d7f87; stroke-dasharray: 5 5; }
.cd-r { fill: #ef5350; stroke: #ef5350; }
.cd-g { fill: #26a69a; stroke: #26a69a; }
.wk-r { stroke: #ef5350; }
.wk-g { stroke: #26a69a; }
.vb-r { fill: #f5a5a1; }
.vb-g { fill: #93d2c6; }
.ln-o { fill: none; stroke: #eba238; stroke-width: 1.400; }
.ln-b { fill: none; stroke: #3a8dcd; stroke-width: 1.400; }
.ma-h { fill: none; stroke: #f7d9a8; stroke-width: 2.500; stroke-opacity: .7; }
.ma { fill: none; stroke: #c2955a; stroke-width: 1.100; }
.dotline { stroke: #3f8f87; stroke-dasharray: 1 2; fill: none; }
.cross { stroke: #555; stroke-dasharray: 5 4; fill: none; }
.blackline { stroke: #000; stroke-width: 3; fill: none; }
.handle { fill: #fff; stroke: #2a7fd0; stroke-width: 2; }
.dot-o { fill: #aaa; }
.dot-i { fill: #222; }
.fib-t text { font-size: 15px; text-anchor: end; }
.c-gray { fill: #7d8089; }
.c-lblue { fill: #79b3e3; }
.c-teal { fill: #2a9d90; }
.c-green { fill: #5ca75f; }
.c-lgreen { fill: #96cc98; }
.c-red { fill: #e0565c; }
.c-blue2 { fill: #3a9fd8; }
.c-orange { fill: #e6a02e; }
.axis-bg { fill: #fff; }
.ticks { stroke: #50535e; fill: none; }
.axisline { stroke: #50535e; stroke-width: 1.200; fill: none; }
.px text { font-size: 14px; fill: #6a6d78; }
.bd-green { fill: #26a69a; }
.bd-black { fill: #000; }
.bd-dark { fill: #4a5060; }
.bd-plus { stroke: #fff; fill: none; }
.bd-t { font-size: 14px; fill: #fff; }
.bd-c { text-anchor: middle; font-size: 14.500px; }
.tx text { font-size: 14px; font-weight: 500; fill: #4a4d58; text-anchor: middle; }
.tx .tx-l { font-weight: 400; fill: #6a6d78; }
.sun { color: #222; }
.lg-title { font-size: 18.800px; fill: #666; }
.ohlc-bg { fill: #fff; fill-opacity: .55; }
.min-o { fill: #e2e2e4; }
.min-i { fill: #7d8089; }
.ohlc { font-size: 16.700px; fill: #6a6d78; }
.ohlc .v { fill: #26a69a; }
.box-r { fill: #fff; stroke: #e57373; }
.box-b { fill: #fff; stroke: #4ba3d6; }
.box-t { font-size: 15px; text-anchor: middle; }
.c-rd { fill: #d9626a; }
.c-bl { fill: #3f9cc9; }
.c-gy { fill: #787b86; }
.lg-s { font-size: 15.500px; }
.lg-m { fill: #b6b8be; }
.lg-d { fill: #666971; }
.lg-g { fill: #b4d8ee; }
.lg-o { fill: #cf9a3a; }
.lg-eye { color: #555; }
.coll { fill: #fff; stroke: #d4d6dc; }
.coll-c { fill: none; stroke: #222; stroke-width: 1.300; }
.btn-w { fill: #fff; stroke: #f0dede; }
.btn-i { color: #222; }
.btn-i2 { stroke-width: 1.800; }
.cny { fill: #fff; stroke: #e0e3eb; }
.cny-t { font-size: 14px; fill: #6a6d78; text-anchor: middle; }

.floatbar { position: absolute; left: 695px; top: 453px; height: 49px; width: 556px; display: flex; background: #fff; border-radius: 4px; box-shadow: 0 1px 4px rgba(0,0,0,.3); color: #787b86; }
.fb { display: flex; align-items: center; justify-content: center; gap: 3px; border-right: 1px solid #e6e8ec; position: relative; flex: none; }
.fb-h { width: 20px; }
.fb-h i { width: 7px; height: 20px; background: radial-gradient(circle, #c4c6cc 1.500px, transparent 2px) 0 0 / 7px 5px; }
.w48f { width: 48.700px; }
.fb-ic { width: 24px; height: 26px; }
.fb-pen { align-items: flex-start; padding-top: 6px; }
.pen-bar { position: absolute; left: 9px; bottom: 7px; width: 30px; height: 6px; background: #000; }
.car { width: 0; height: 0; border: 3px solid transparent; border-top: 4px solid #555; border-bottom: 0; }
.ln { width: 24px; background: #787b86; }
.ln3 { height: 4px; border-radius: 2px; }
.ln1 { height: 2px; background: #a5a7ae; }
.fillonly { fill: #787b86; stroke: none; }
.grey2 { stroke: #787b86; stroke-width: 2.2; fill: none; }
.ring { stroke: #787b86; stroke-width: 3; fill: none; }
.fb-l { stroke-width: 1.600; width: 22px; height: 24px; }

.rangebar { height: 49px; background: #fff; display: flex; align-items: center; font-size: 17px; flex: none; border-radius: 0 0 4px 4px; padding-left: 20px; margin-bottom: 5px; }
.ranges { display: flex; width: 461px; gap: 18px; flex: none; white-space: nowrap; }
.rb-div { width: 1px; height: 30px; background: #e0e3eb; flex: none; }
.rb-ic { width: 24px; height: 26px; margin-left: 24px; }
.rb-clock { margin-left: auto; font-size: 17.500px; }
.rb-div2 { margin: 0 20px; }
.rb-b { color: #2b84c9; font-size: 17.500px; }
.rb-p { margin: 0 20px 0 24px; font-size: 18px; }
.rb-log { margin-right: 18px; }
.rangebar > .rb-b:last-child { margin-right: 14px; }

.bottomtabs { height: 47px; background: #fff; display: flex; align-items: center; font-size: 17.500px; flex: none; border-radius: 4px 4px 0 0; }
.bt { height: 47px; display: flex; align-items: center; justify-content: center; gap: 12px; border-right: 1px solid #e6e8ec; white-space: nowrap; flex: none; }
.bt1 { width: 137px; justify-content: flex-start; padding-left: 19px; font-size: 18px; }
.bt2 { width: 111px; } .bt3 { width: 127px; } .bt4 { width: 128px; } .bt5 { width: 112px; }
.bt-up { width: 26px; height: 26px; margin-left: auto; }
.bt-win { width: 26px; height: 30px; margin: 0 18px 0 20px; }

.panel { width: 335px; flex: none; background: #fff; }
.p-head { height: 61px; display: flex; align-items: center; justify-content: space-between; padding: 0 20px 0 19px; }
.p-ht { width: 28px; height: 30px; margin-bottom: 3px; }
.p-tools { height: 47px; display: flex; gap: 20px; padding-left: 21px; align-items: center; border-bottom: 1px solid #e0e3eb; }
.p-t { width: 27px; height: 27px; }
.rows { padding: 8px 0 7px; border-bottom: 1px solid #e0e3eb; }
.rows2 { border: 0; padding-top: 8px; }
.row { height: 47.500px; display: flex; align-items: center; padding: 0 51px 0 30px; font-size: 17.400px; white-space: nowrap; color: #131722; }
.row-b { font-weight: 500; }
.row-sel { background: #bbdefb; }
.r-ic { width: 30px; height: 26px; margin-right: 13px; color: #222; }
.r-t { flex: 1; min-width: 0; }
.muted .r-t { color: #b5b7bc; }
.r-a { width: 22px; height: 22px; color: #8b8d94; margin-left: 16px; }
.r-lockonly { margin-right: 38px; }

.rail { flex: 1; background: #f0f3fa; position: relative; overflow: hidden; border-left: 1px solid #e0e3eb; }
.rail-g { padding-bottom: 7px; border-bottom: 2px solid #e0e3eb; }
.rail-g2 { padding-top: 9px; }
.rail-g3 { padding-top: 9px; border: 0; }
.rail-c { height: 62.500px; display: flex; align-items: center; justify-content: center; color: #222; position: relative; }
.rail-i { width: 30px; height: 30px; }
.rail-w { width: 39px; }
.rail-act { background: #fff; margin-top: 15px; color: #3f97d0; }
.rail-badge { position: absolute; left: 32px; top: 8px; width: 20px; height: 20px; border-radius: 50%; background: #f04f5b; color: #fff; font-size: 13px; font-weight: 700; line-height: 20px; text-align: center; }
.rail-scroll { position: absolute; right: 1px; top: 844px; width: 8px; height: 57px; border-radius: 4px; background: #a8a8a8; }
.side-h { position: absolute; left: 1524px; top: 846px; width: 8px; height: 32px; border-radius: 3px; background: #fff; color: #888; font-size: 12px; line-height: 30px; text-align: center; }

.taskbar { height: 50px; background: #24333a; display: flex; align-items: center; flex: none; color: #fff; }
.tk-win { width: 24px; height: 24px; margin: 0 22px 0 18px; fill: #fff; stroke: none; }
.tk-app { width: 61px; height: 50px; display: flex; align-items: center; justify-content: center; }
.tk-on { background: #4e5c62; border-bottom: 3px solid #b4bcc0; margin-left: 2px; }
.tk-ic { width: 32px; height: 32px; }
.ch-r { fill: #e33b2e; }
.ch-y { fill: #f8c01b; }
.ch-g { fill: #2da94f; }
.ch-b { fill: #3f86e0; }
.calc { fill: #7c8a92; }
.calc-s { fill: #4fc3e8; }
.calc-k { fill: #dfe4e7; }
.calc-b { fill: #2c6fb0; }
.ed-b { fill: #1773c9; }
.ed-g { fill: #3bc8a8; }
.ed-d { fill: #0b4f9c; }
.tray { margin-left: auto; display: flex; align-items: center; }
.tr-i { width: 22px; height: 22px; margin-right: 8px; }
.tr-c { width: 22px; height: 22px; margin-right: 8px; flex: none; }
.tr-cl { margin-right: 6px; }
.tr-sp { margin-right: 11px; }
.cy { fill: #2ac3e6; stroke: none; }
.cyl { stroke: #2ac3e6; fill: none; }
.rd { fill: #e8483f; }
.cloud { fill: #d8dde0; }
.tr-ime { font: 18px "Noto Sans CJK SC", sans-serif; margin: 0 16px 0 0; }
.tr-s { width: 22px; height: 22px; border-radius: 4px; background: #e8662a; color: #fff; font: 700 18px/22px Roboto, sans-serif; text-align: center; transform: rotate(-8deg); }
.clock { width: 100px; margin-left: 7px; display: flex; flex-direction: column; align-items: center; font: 14.500px/22px "Noto Sans", sans-serif; }
.tr-n { width: 22px; height: 22px; margin: 0 29px 0 13px; fill: #fff; stroke: none; }
```
FILE: chart.js
```javascript
// Candles and volume were read off the reference; coordinates are in crop units
// and are mapped to page pixels here.
var C3 = { sx: 1 / 1.96, sy: 1 / 3, ox: 0, oy: 280 };
var C4 = { sx: 1 / 1.912, sy: 1 / 2.904, ox: 700, oy: 140 };
var V7 = { sx: 1 / 2.063, sy: 1 / 3, ox: 0, oy: 640 };
var V8 = { sx: 1 / 2.01, sy: 1 / 3, ox: 760, oy: 640 };

// x, colour (1 red, 0 green), body top, body bottom, wick top, wick bottom
var candles3 = [
[150,0,560,560,540,595],[167,0,575,655,575,660],[185,1,837,837,837,837],[203,1,862,1013,815,1013],[221,1,735,872,715,872],[236,1,745,745,715,800],[254,1,730,765,685,790],[271,1,670,745,640,760],[287,0,670,680,630,715],[305,1,655,685,610,690],[322,0,667,683,640,690],[338,1,684,684,650,710],[356,1,528,653,525,680],[373,1,490,545,470,570],[390,0,465,540,465,570],[407,0,522,522,490,560],[424,0,525,525,510,530],[442,1,427,520,420,525],[458,1,420,480,380,480],[475,0,465,505,440,510],[492,1,440,500,410,545],[510,0,510,563,465,570],[526,0,535,572,490,585],[544,0,530,543,490,585],[561,1,530,545,500,575],[577,1,507,535,465,550],[595,0,513,570,510,575],[612,0,570,680,570,685],[628,1,648,698,625,795],[646,1,605,618,590,650],[663,1,623,637,598,655],[680,1,652,780,640,780],[696,0,642,750,605,770],[714,1,693,722,680,820],[732,1,673,684,605,745],[748,0,690,722,675,765],[765,1,718,718,680,750],[782,1,763,777,720,780],[799,0,729,756,720,790],[816,1,690,720,683,730],[834,1,698,698,670,760],[851,0,673,684,635,710],[867,0,690,735,680,755],[885,1,673,731,673,735],[902,0,558,588,505,660],[918,0,640,650,618,722],[936,0,674,674,640,695],[953,1,640,654,633,685],[970,1,660,660,635,670],[987,0,643,692,640,705],[1004,0,688,732,688,740],[1022,0,741,785,738,795],[1038,1,753,780,750,790],[1055,0,755,785,740,795],[1072,1,765,795,762,808],[1089,1,700,752,678,765],[1106,1,655,710,650,718],[1123,0,645,672,632,680],[1141,0,646,653,632,685],[1157,0,651,685,620,690],[1175,0,673,680,650,710],[1192,1,613,680,610,705],[1208,1,514,620,440,668],[1225,1,511,521,440,550],[1243,0,489,500,430,520],[1259,1,492,512,430,515],[1276,1,468,492,430,495],[1294,1,442,473,430,475],[1311,0,427,461,393,465],[1328,0,442,452,430,490],[1345,1,283,465,283,465],[1362,1,201,280,125,320]];
var candles4 = [
[6,1,596,615,585,635],[24,1,558,613,520,615],[41,1,540,563,518,610],[58,0,545,558,515,600],[74,0,534,620,525,622],[91,0,590,673,585,705],[108,0,673,673,650,720],[124,1,548,660,525,665],[141,0,560,568,495,630],[157,0,566,645,550,680],[174,1,569,645,550,650],[190,1,467,557,430,580],[207,0,460,484,420,510],[224,1,490,514,450,515],[240,0,460,508,455,525],[257,0,476,505,465,525],[274,1,500,500,470,520],[289,1,408,502,370,520],[306,1,398,427,385,430],[324,0,375,470,372,480],[340,1,453,526,437,528],[356,1,456,476,400,478],[373,1,432,432,400,470],[390,0,415,427,400,440],[406,0,421,480,415,495],[423,1,415,476,388,498],[440,0,422,422,382,462],[456,1,319,424,276,442],[473,0,331,358,300,365],[490,1,340,360,335,368],[507,0,343,343,305,368],[523,1,302,333,280,360],[540,0,285,358,283,375],[557,0,375,414,375,480],[573,1,407,418,385,445],[590,1,388,436,375,455],[607,1,311,340,275,365],[623,1,342,342,320,372],[640,1,293,345,225,370],[657,1,209,305,150,305],[673,0,270,301,265,340],[690,0,280,312,255,325],[706,0,282,443,280,445],[723,0,460,478,445,520],[739,1,404,478,404,510],[756,1,241,427,240,435],[773,1,96,197,96,240],[789,0,93,110,65,185],[806,0,136,226,90,258],[823,0,166,205,150,258],[840,1,151,173,85,205],[856,1,131,142,115,210],[873,0,116,138,110,180],[890,0,131,163,110,190],[906,1,139,153,125,195],[923,1,153,165,125,200],[940,1,110,174,75,195],[957,0,127,162,115,190],[972,0,142,166,75,210],[990,0,139,168,95,225],[1006,1,147,174,88,175],[1022,0,134,278,134,328],[1039,0,277,317,245,328],[1056,1,269,308,250,315],[1072,0,270,283,245,315],[1089,1,277,292,215,300],[1106,0,274,328,265,345],[1123,1,325,340,320,375],[1139,1,270,327,240,330],[1156,0,242,257,228,310],[1172,1,268,268,235,325],[1189,0,261,310,258,330],[1206,0,314,340,295,370],[1222,1,250,327,235,360],[1238,0,218,232,197,275],[1255,0,229,258,195,285],[1272,0,235,270,225,295],[1289,0,258,290,200,292],[1304,1,322,331,302,355],[1322,0,322,448,306,450],[1339,0,430,472,415,500],[1355,0,490,580,462,590],[1372,0,563,615,550,645]];

// x, colour (1 red, 0 green), bar top; all stand on crop y 732
var bars7 = [[158,0,624],[176,0,600],[194,0,654],[212,0,438],[230,1,504],[248,0,627],[266,1,585],[284,1,606],[301,0,630],[319,1,642],[337,0,642],[355,1,651],[373,1,444],[391,1,580],[409,0,593],[427,1,575],[445,0,616],[463,1,477],[481,1,510],[499,0,612],[517,1,585],[535,0,555],[553,0,585],[571,1,585],[589,1,621],[606,1,516],[624,0,578],[642,0,585],[660,1,606],[678,1,591],[696,0,645],[714,0,642],[732,0,630],[750,1,612],[768,1,606],[786,0,603],[804,1,651],[822,0,660],[840,1,669],[858,1,657],[876,0,621],[894,1,642],[912,0,648],[930,1,651],[948,1,72],[965,0,327],[984,0,555],[1002,1,492],[1020,0,594],[1038,0,549],[1056,0,564],[1074,0,579],[1092,1,618],[1110,0,639],[1127,1,639],[1145,1,565],[1163,1,579],[1181,0,636],[1199,1,633],[1217,0,651],[1235,1,645],[1253,1,594],[1271,1,408],[1289,1,390],[1306,1,534],[1324,1,570],[1342,1,546],[1360,1,561],[1378,0,546],[1396,1,581],[1415,1,186],[1433,1,50],[1450,1,384],[1468,1,312],[1487,1,474],[1505,0,456],[1522,0,525],[1540,0,435],[1558,0,543]];
var bars8 = [[7,1,414],[25,0,470],[43,0,441],[61,1,469],[78,1,303],[96,0,507],[114,0,555],[131,0,603],[149,1,555],[166,1,573],[183,1,432],[201,1,576],[218,0,444],[236,1,555],[253,0,519],[271,1,555],[288,1,609],[306,0,555],[324,1,453],[341,0,528],[358,1,411],[376,0,555],[394,1,576],[411,0,579],[428,1,477],[446,0,489],[463,0,483],[481,1,450],[498,1,444],[516,1,408],[533,0,477],[550,1,420],[569,1,246],[586,0,168],[603,0,372],[621,0,336],[638,0,483],[655,1,549],[673,1,363],[691,1,60],[708,0,189],[726,0,321],[744,1,420],[761,1,435],[778,1,504],[796,0,582],[813,0,525],[831,1,492],[849,0,525],[866,1,438],[883,0,537],[901,0,483],[919,0,429],[936,1,444],[953,0,417],[971,0,540],[988,1,582],[1005,0,558],[1023,1,549],[1041,0,576],[1058,0,618],[1076,1,507],[1093,1,579],[1111,0,570],[1128,0,570],[1146,0,531],[1163,1,417],[1181,1,456],[1198,0,591],[1215,0,600],[1233,0,516],[1251,0,540],[1268,0,465],[1286,0,534],[1303,0,480],[1321,0,495]];

var ma3 = [[138,527],[180,545],[230,560],[280,572],[350,582],[420,590],[480,593],[600,598],[700,605],[800,610],[900,611],[1000,614],[1100,618],[1200,619],[1300,610]];
var ma4 = [[0,988],[100,975],[190,965],[280,945],[370,922],[440,910],[520,888],[620,867],[720,848],[760,840],[830,822],[950,790],[1020,770],[1100,753],[1180,738],[1240,725],[1300,710],[1375,703]];
var blue7 = [[145,590],[160,603],[185,598],[196,602],[210,572],[230,565],[265,565],[285,552],[300,590],[320,620],[340,625],[358,636],[375,600],[410,585],[435,566],[465,570],[485,555],[520,560],[537,550],[555,572],[580,587],[610,575],[650,580],[680,577],[710,610],[735,625],[775,628],[790,620],[820,627],[870,652],[920,650],[935,645],[950,520],[970,470],[985,455],[1005,420],[1020,409],[1040,500],[1060,552],[1075,556],[1095,582],[1130,607],[1165,608],[1200,613],[1225,615],[1255,633],[1275,580],[1300,525],[1320,505],[1345,492],[1375,550],[1397,565],[1435,385],[1470,310],[1488,283],[1525,430],[1540,435],[1560,490]];
var blue8 = [[0,480],[25,475],[45,458],[62,465],[80,415],[110,450],[135,490],[150,505],[168,560],[185,545],[200,550],[220,518],[235,518],[255,508],[275,535],[290,540],[308,557],[323,540],[340,540],[375,498],[390,502],[412,530],[430,520],[448,535],[465,525],[500,470],[520,457],[540,455],[552,440],[570,400],[587,345],[600,342],[622,310],[640,320],[673,425],[695,350],[745,272],[762,287],[800,460],[820,495],[850,525],[880,505],[905,495],[945,465],[970,463],[985,475],[1020,525],[1060,580],[1080,562],[1115,572],[1130,568],[1160,535],[1185,508],[1205,515],[1225,520],[1250,543],[1275,543],[1290,535],[1305,510],[1325,504]];
var orange7 = [[145,577],[195,580],[215,568],[260,565],[300,575],[345,584],[400,583],[445,590],[480,577],[540,576],[610,578],[715,577],[740,587],[805,590],[835,605],[880,613],[935,624],[950,595],[970,587],[1040,578],[1100,571],[1170,567],[1250,565],[1285,545],[1320,570],[1400,575],[1440,525],[1480,495],[1520,485],[1560,468]];
var orange8 = [[0,465],[40,442],[80,445],[120,438],[180,440],[225,475],[260,495],[290,506],[360,506],[430,530],[470,525],[520,507],[540,507],[580,475],[640,447],[670,445],[710,410],[760,380],[780,380],[840,393],[900,402],[940,425],[980,442],[1020,450],[1060,500],[1130,527],[1190,515],[1240,530],[1325,540]];

var NS = 'http://www.w3.org/2000/svg';
function el(parent, name, attrs) {
  var node = document.createElementNS(NS, name);
  Object.keys(attrs).forEach(function (k) { node.setAttribute(k, attrs[k]); });
  parent.appendChild(node);
}
function px(c, x) { return c.ox + x * c.sx; }
function py(c, y) { return c.oy + y * c.sy; }
function points(list) {
  return list.map(function (seg) {
    return seg[1].map(function (p) {
      return px(seg[0], p[0]).toFixed(1) + ',' + py(seg[0], p[1]).toFixed(1);
    }).join(' ');
  }).join(' ');
}

var gCandles = document.getElementById('candles');
[[C3, candles3], [C4, candles4]].forEach(function (set) {
  set[1].forEach(function (d) {
    var c = set[0], x = Math.round(px(c, d[0])) + 0.5, name = d[1] ? 'r' : 'g';
    var top = py(c, d[2]), bot = py(c, d[3]);
    if (bot - top < 2) { bot = top + 2; }
    el(gCandles, 'line', { x1: x, x2: x, y1: py(c, d[4]).toFixed(1), y2: py(c, d[5]).toFixed(1), 'class': 'wk-' + name });
    el(gCandles, 'rect', { x: x - 3.5, y: top.toFixed(1), width: 7, height: (bot - top).toFixed(1), 'class': 'cd-' + name, 'stroke-width': 0 });
  });
});

var gBars = document.getElementById('bars');
el(gBars, 'rect', { x: 70, y: py(V7, 528), width: 2, height: py(V7, 732) - py(V7, 528), 'class': 'vb-g' });
[[V7, bars7], [V8, bars8]].forEach(function (set) {
  set[1].forEach(function (d) {
    var c = set[0], x = px(c, d[0]);
    el(gBars, 'rect', { x: (x - 3.7).toFixed(1), y: py(c, d[2]).toFixed(1), width: 7.4, height: (py(c, 732) - py(c, d[2])).toFixed(1), 'class': 'vb-' + (d[1] ? 'r' : 'g') });
  });
});

var maPts = points([[C3, ma3], [C4, ma4]]);
document.getElementById('ma200').setAttribute('points', maPts);
document.getElementById('ma200h').setAttribute('points', maPts);
document.getElementById('vol-b').setAttribute('points', points([[V7, blue7], [V8, blue8]]));
document.getElementById('vol-o').setAttribute('points', points([[V7, orange7], [V8, orange8]]));
```
